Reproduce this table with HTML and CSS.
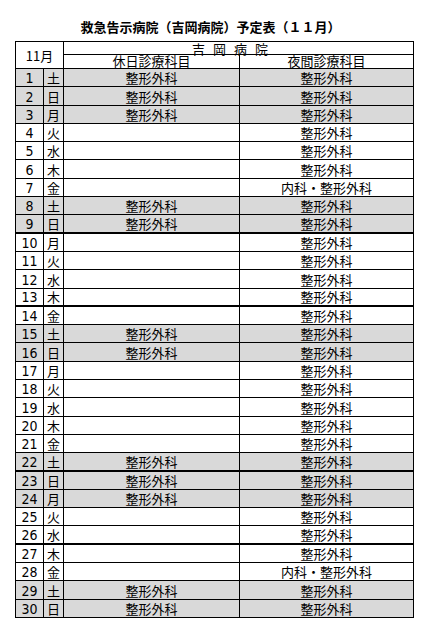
FILE: index.html
```html
<!DOCTYPE html>
<html lang="ja">
<head>
<meta charset="utf-8">
<title>救急告示病院（吉岡病院）予定表（１１月）</title>
<link rel="stylesheet" href="styles.css">
</head>
<body>
<div class="page">
  <h1 class="title">救急告示病院（吉岡病院）予定表（１１月）</h1>
  <div class="sheet">
    <div class="head">
      <div class="hc month">11月</div>
      <div class="hc hosp">吉岡病院</div>
      <div class="hc sub">休日診療科目</div>
      <div class="hc sub">夜間診療科目</div>
    </div>
    <div class="row hol"><div class="c n">1</div><div class="c w">土</div><div class="c">整形外科</div><div class="c">整形外科</div></div>
    <div class="row hol"><div class="c n">2</div><div class="c w">日</div><div class="c">整形外科</div><div class="c">整形外科</div></div>
    <div class="row hol"><div class="c n">3</div><div class="c w">月</div><div class="c">整形外科</div><div class="c">整形外科</div></div>
    <div class="row"><div class="c n">4</div><div class="c w">火</div><div class="c"></div><div class="c">整形外科</div></div>
    <div class="row"><div class="c n">5</div><div class="c w">水</div><div class="c"></div><div class="c">整形外科</div></div>
    <div class="row"><div class="c n">6</div><div class="c w">木</div><div class="c"></div><div class="c">整形外科</div></div>
    <div class="row"><div class="c n">7</div><div class="c w">金</div><div class="c"></div><div class="c">内科・整形外科</div></div>
    <div class="row hol"><div class="c n">8</div><div class="c w">土</div><div class="c">整形外科</div><div class="c">整形外科</div></div>
    <div class="row hol thick"><div class="c n">9</div><div class="c w">日</div><div class="c">整形外科</div><div class="c">整形外科</div></div>
    <div class="row"><div class="c n">10</div><div class="c w">月</div><div class="c"></div><div class="c">整形外科</div></div>
    <div class="row"><div class="c n">11</div><div class="c w">火</div><div class="c"></div><div class="c">整形外科</div></div>
    <div class="row"><div class="c n">12</div><div class="c w">水</div><div class="c"></div><div class="c">整形外科</div></div>
    <div class="row thick"><div class="c n">13</div><div class="c w">木</div><div class="c"></div><div class="c">整形外科</div></div>
    <div class="row"><div class="c n">14</div><div class="c w">金</div><div class="c"></div><div class="c">整形外科</div></div>
    <div class="row hol"><div class="c n">15</div><div class="c w">土</div><div class="c">整形外科</div><div class="c">整形外科</div></div>
    <div class="row hol"><div class="c n">16</div><div class="c w">日</div><div class="c">整形外科</div><div class="c">整形外科</div></div>
    <div class="row"><div class="c n">17</div><div class="c w">月</div><div class="c"></div><div class="c">整形外科</div></div>
    <div class="row"><div class="c n">18</div><div class="c w">火</div><div class="c"></div><div class="c">整形外科</div></div>
    <div class="row"><div class="c n">19</div><div class="c w">水</div><div class="c"></div><div class="c">整形外科</div></div>
    <div class="row"><div class="c n">20</div><div class="c w">木</div><div class="c"></div><div class="c">整形外科</div></div>
    <div class="row"><div class="c n">21</div><div class="c w">金</div><div class="c"></div><div class="c">整形外科</div></div>
    <div class="row hol thick"><div class="c n">22</div><div class="c w">土</div><div class="c">整形外科</div><div class="c">整形外科</div></div>
    <div class="row hol"><div class="c n">23</div><div class="c w">日</div><div class="c">整形外科</div><div class="c">整形外科</div></div>
    <div class="row hol"><div class="c n">24</div><div class="c w">月</div><div class="c">整形外科</div><div class="c">整形外科</div></div>
    <div class="row"><div class="c n">25</div><div class="c w">火</div><div class="c"></div><div class="c">整形外科</div></div>
    <div class="row thick"><div class="c n">26</div><div class="c w">水</div><div class="c"></div><div class="c">整形外科</div></div>
    <div class="row"><div class="c n">27</div><div class="c w">木</div><div class="c"></div><div class="c">整形外科</div></div>
    <div class="row"><div class="c n">28</div><div class="c w">金</div><div class="c"></div><div class="c">内科・整形外科</div></div>
    <div class="row hol"><div class="c n">29</div><div class="c w">土</div><div class="c">整形外科</div><div class="c">整形外科</div></div>
    <div class="row hol"><div class="c n">30</div><div class="c w">日</div><div class="c">整形外科</div><div class="c">整形外科</div></div>
  </div>
</div>
</body>
</html>
```

FILE: styles.css
```css
body {
  margin: 0;
  background: #fff;
  color: #000;
  font-family: "Noto Sans CJK JP", sans-serif;
  font-size: 13px;
}

.page {
  padding: 20px 0 0 15px;
}

.title {
  margin: 0 0 8px;
  width: 391px;
  padding-right: 8px;
  text-align: center;
  font-size: 13px;
  line-height: 13px;
  font-weight: bold;
}

.sheet {
  width: 399px;
  box-sizing: border-box;
  border-left: 1px solid #000;
  border-top: 1px solid #000;
}

.head {
  display: grid;
  grid-template-columns: 48px 176px 174px;
  grid-template-rows: 13px 14px;
}

.hc {
  box-sizing: border-box;
  border-right: 1px solid #000;
  border-bottom: 1px solid #000;
  display: flex;
  justify-content: center;
  align-items: flex-end;
  line-height: 13px;
  white-space: nowrap;
}

.sub {
  padding-bottom: 1px;
}

.month {
  grid-row: 1 / 3;
  align-items: center;
}

.hosp {
  grid-column: 2 / 4;
  align-items: flex-start;
  letter-spacing: 8px;
  padding-right: 9px;
}

.row {
  display: grid;
  grid-template-columns: 28px 20px 176px 174px;
  height: 18.3px;
  box-sizing: border-box;
  border-bottom: 1px solid #000;
}

.row.thick {
  border-bottom-width: 2px;
}

.hol {
  background: #d9d9d9;
}

.c {
  border-right: 1px solid #000;
  display: flex;
  justify-content: center;
  align-items: flex-end;
  line-height: 13px;
  padding-bottom: 2px;
  white-space: nowrap;
}

.n {
  font-family: "DejaVu Sans Condensed", "Liberation Sans Narrow", "Liberation Sans", sans-serif;
  font-stretch: condensed;
  font-size: 14px;
  padding-bottom: 1px;
}
```
